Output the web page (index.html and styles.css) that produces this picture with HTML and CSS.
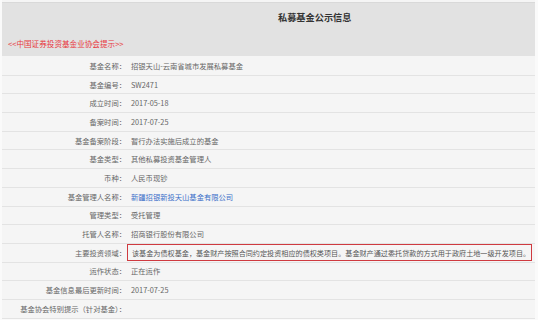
FILE: index.html
```html
<!DOCTYPE html>
<html lang="zh-CN">
<head>
<meta charset="utf-8">
<title>私募基金公示信息</title>
<link rel="stylesheet" href="styles.css">
</head>
<body>
<div class="page">
  <div class="header">
    <div class="title">私募基金公示信息</div>
    <div class="notice">&lt;&lt;中国证券投资基金业协会提示&gt;&gt;</div>
  </div>
  <div class="table">
    <div class="row"><div class="label">基金名称：</div><div class="value">招银天山-云南省城市发展私募基金</div></div>
    <div class="row"><div class="label">基金编号：</div><div class="value">SW2471</div></div>
    <div class="row"><div class="label">成立时间：</div><div class="value">2017-05-18</div></div>
    <div class="row"><div class="label">备案时间：</div><div class="value">2017-07-25</div></div>
    <div class="row"><div class="label">基金备案阶段：</div><div class="value">暂行办法实施后成立的基金</div></div>
    <div class="row"><div class="label">基金类型：</div><div class="value">其他私募投资基金管理人</div></div>
    <div class="row"><div class="label">币种：</div><div class="value">人民币现钞</div></div>
    <div class="row"><div class="label">基金管理人名称：</div><div class="value"><span class="link">新疆招银新投天山基金有限公司</span></div></div>
    <div class="row"><div class="label">管理类型：</div><div class="value">受托管理</div></div>
    <div class="row"><div class="label">托管人名称：</div><div class="value">招商银行股份有限公司</div></div>
    <div class="row"><div class="label">主要投资领域：</div><div class="value"><span class="mark">该基金为债权基金，基金财产按照合同约定投资相应的债权类项目。基金财产通过委托贷款的方式用于政府土地一级开发项目。</span></div></div>
    <div class="row"><div class="label">运作状态：</div><div class="value">正在运作</div></div>
    <div class="row"><div class="label">基金信息最后更新时间：</div><div class="value">2017-07-25</div></div>
    <div class="row"><div class="label">基金协会特别提示（针对基金）：</div><div class="value"></div></div>
  </div>
</div>
</body>
</html>
```

FILE: styles.css
```css
html, body {
  margin: 0;
  padding: 0;
  background: #fafafa;
}
body {
  font-family: "Noto Sans CJK SC", "Noto Sans", sans-serif;
  width: 538px;
  height: 320px;
  overflow: hidden;
}
.page {
  margin: 0 3px 0 2px;
  padding-top: 2px;
  background: #f5f5f5;
}
.header {
  background: #e2e2e2;
  border-top: 1px solid #d9d9d9;
  height: 54px;
  box-sizing: border-box;
  display: flex;
  flex-direction: column;
}
.title {
  padding-left: 276px;
  padding-top: 8px;
  font-size: 9.2px;
  line-height: 12px;
  font-weight: bold;
  color: #333;
}
.notice {
  margin-top: 16px;
  padding-left: 6px;
  font-size: 7.6px;
  line-height: 10px;
  color: #e8383d;
}
.table {
  display: flex;
  flex-direction: column;
  padding-top: 1px;
}
.row {
  display: flex;
  height: 18.7px;
  box-sizing: border-box;
  border-bottom: 1px solid #e3e3e3;
  align-items: center;
  font-size: 7.3px;
  color: #666;
}
.label {
  width: 124px;
  flex-shrink: 0;
  text-align: right;
  white-space: nowrap;
}
.value {
  flex: 1;
  min-width: 0;
  height: 100%;
  display: flex;
  align-items: center;
  padding-left: 5px;
  white-space: nowrap;
}
.link {
  color: #3a6fc9;
}
.mark {
  display: flex;
  align-items: center;
  flex-shrink: 0;
  width: 405px;
  height: 17px;
  margin-left: -4px;
  padding: 0 4px 0 4px;
  border: 1.5px solid #cf3a40;
  box-sizing: border-box;
  font-size: 7.12px;
  color: #555;
}
```
